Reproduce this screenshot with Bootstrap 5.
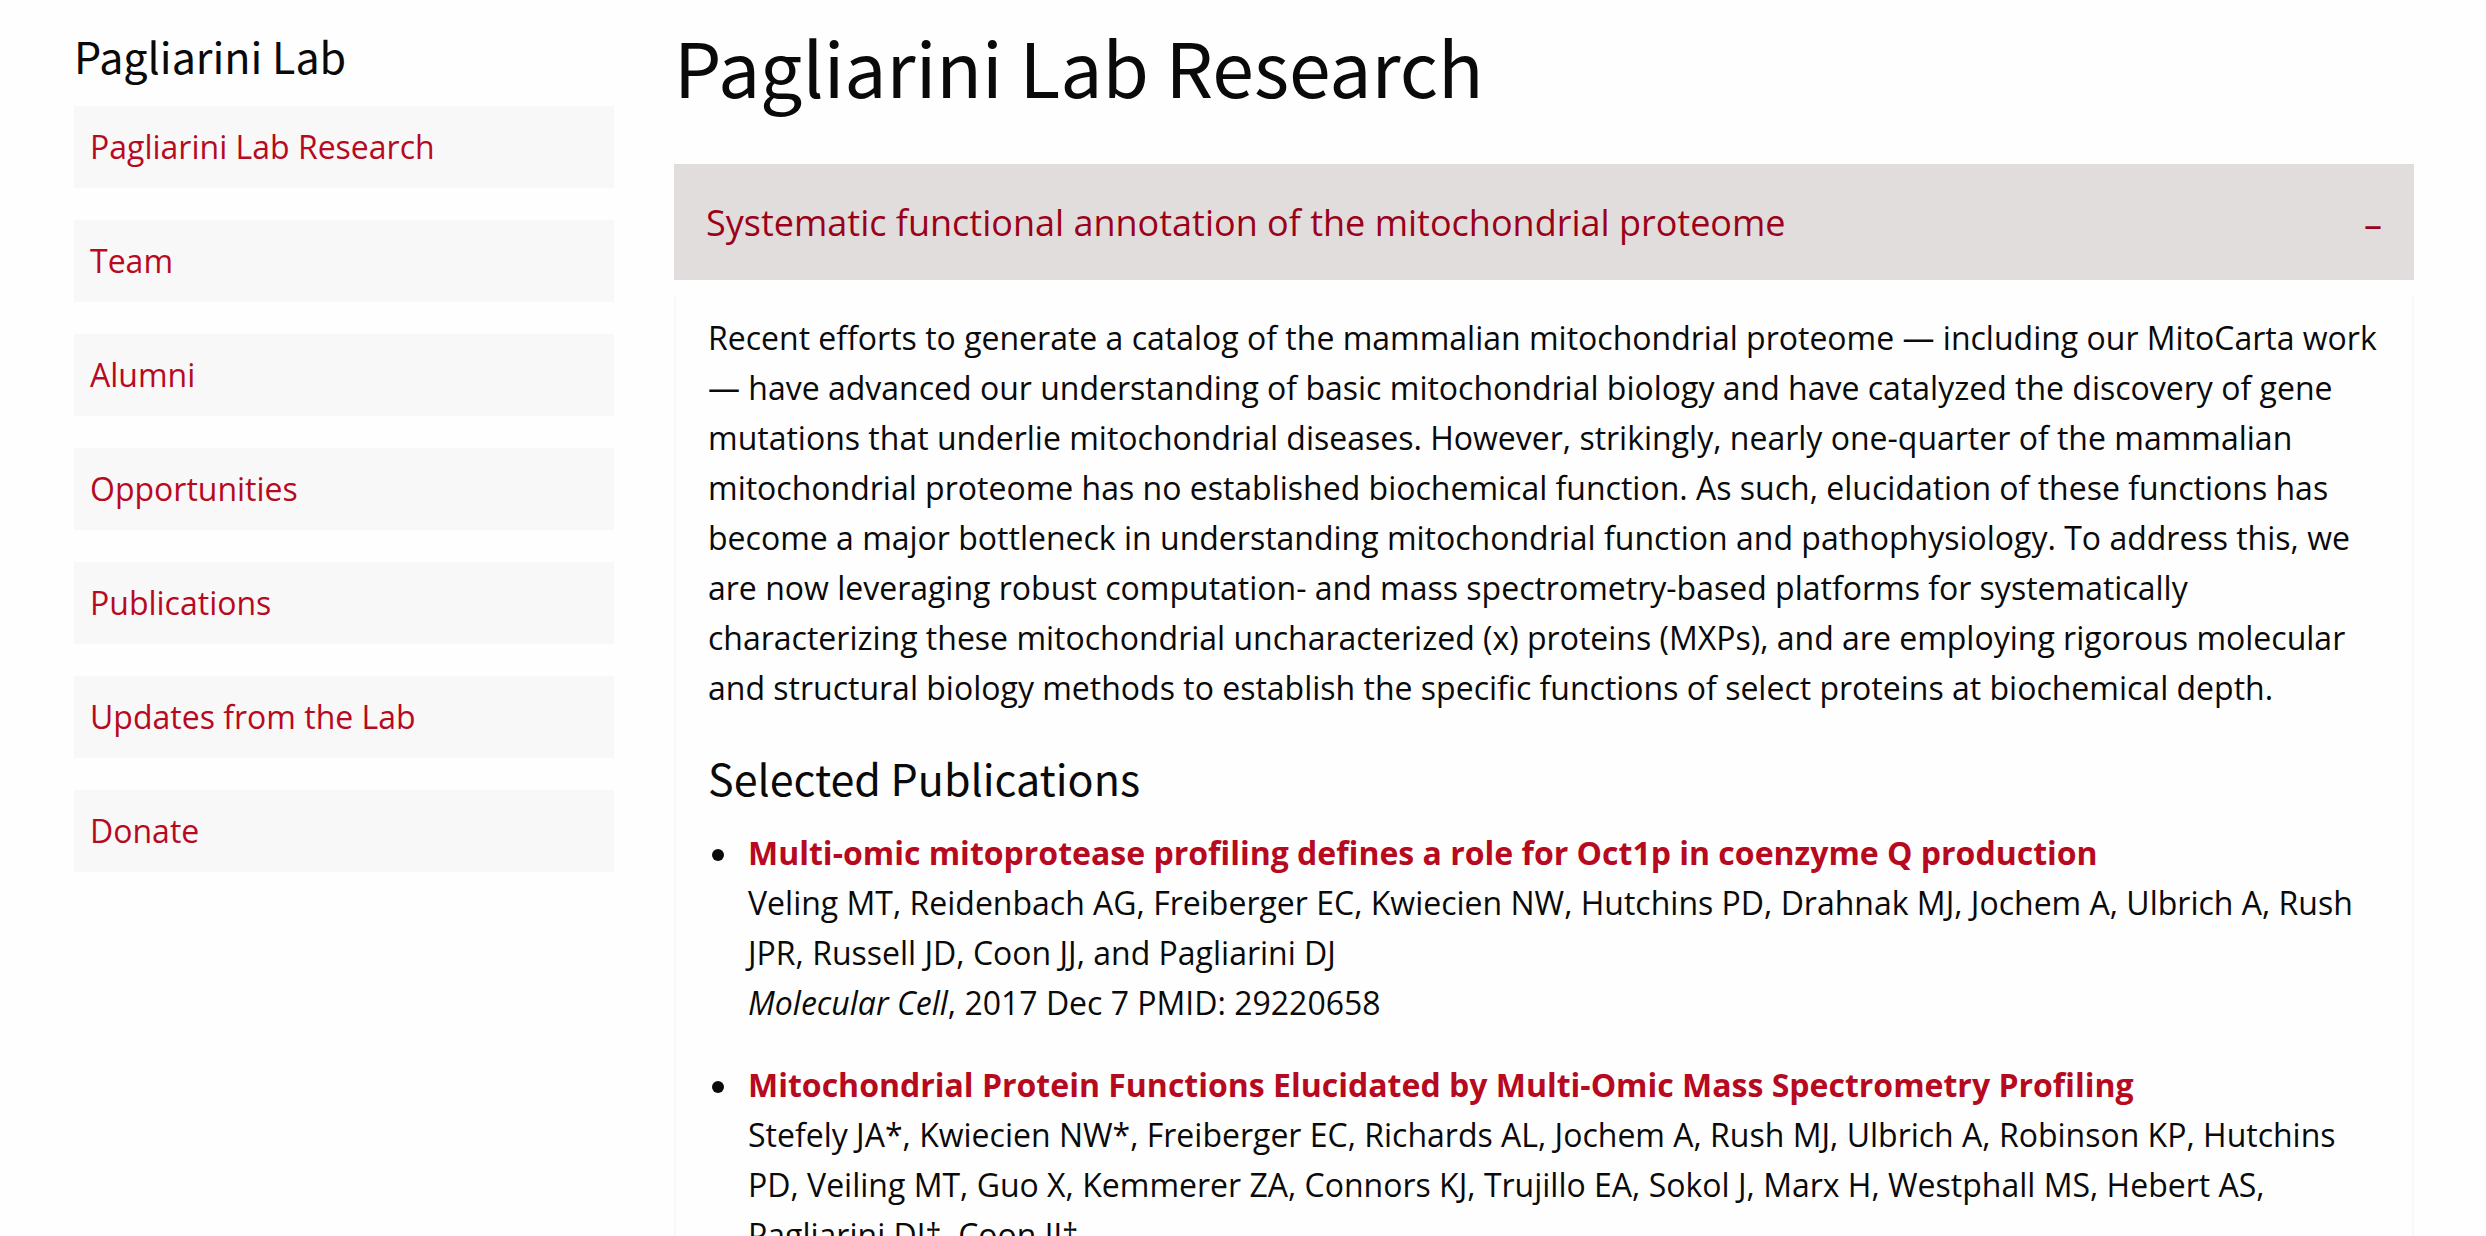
<!DOCTYPE html>
<html lang="en">
<head>
<meta charset="utf-8">
<meta name="viewport" content="width=device-width, initial-scale=1">
<title>Pagliarini Lab Research</title>
<link href="https://cdn.jsdelivr.net/npm/bootstrap@5.3.0/dist/css/bootstrap.min.css" rel="stylesheet">
<style>
  body { font-family: "Open Sans", sans-serif; font-size: 32px; line-height: 50px; color: #0a0a0a; background: #fefefe; }
  a { color: #b70a1f; text-decoration: none; }
  h1, h2, h3 { font-family: "Noto Sans CJK SC", sans-serif; font-weight: 400; margin: 0; }
  .page-shell { padding: 16px 72px 32px 74px; }
  .page-shell > .row { --bs-gutter-x: 60px; }
  h1 { font-size: 75px; line-height: 100px; margin-bottom: 48px; }
  h2, h3 { font-size: 43px; line-height: 64px; }
  .side-title { margin: 7px 0 19px; }
  .side-links { gap: 32px; }
  .side-links .nav-link { padding: 16px; background: #f8f8f8; color: #b70a1f; }
  .topic-toggle { padding: 33px 32px 31px; background: #e1dddc; color: #9b0219; font-size: 36px; line-height: 52px; }
  .topic-mark { padding-top: 4px; line-height: 48px; }
  .topic-body { margin-top: 16px; padding: 17px 32px; border: 2px solid #f8f8f8; border-width: 0 2px; }
  .topic-body p { margin-bottom: 32px; }
  .pub-list { margin: 19px 0 0; padding-left: 40px; list-style: none; }
  .pub-list li { margin-bottom: 32px; }
  .pub-list li::before { content: ""; display: inline-block; width: 12px; height: 12px; margin: 0 24px 0 -36px; border-radius: 50%; background: #0a0a0a; vertical-align: 4px; }
</style>
<script src="https://cdn.jsdelivr.net/npm/bootstrap@5.3.0/dist/js/bootstrap.bundle.min.js" defer></script>
</head>
<body>
<div class="container-fluid page-shell">
  <div class="row">
    <aside class="col-3">
      <h2 class="side-title">Pagliarini Lab</h2>
      <nav class="nav flex-column side-links" aria-label="Pagliarini Lab">
        <a class="nav-link" href="#">Pagliarini Lab Research</a>
        <a class="nav-link" href="#">Team</a>
        <a class="nav-link" href="#">Alumni</a>
        <a class="nav-link" href="#">Opportunities</a>
        <a class="nav-link" href="#">Publications</a>
        <a class="nav-link" href="#">Updates from the Lab</a>
        <a class="nav-link" href="#">Donate</a>
      </nav>
    </aside>
    <main class="col-9">
      <h1>Pagliarini Lab Research</h1>
      <button class="topic-toggle d-flex w-100 justify-content-between align-items-center border-0 text-start" type="button" data-bs-toggle="collapse" data-bs-target="#proteome" aria-expanded="true" aria-controls="proteome">
        <span>Systematic functional annotation of the mitochondrial proteome</span>
        <span class="topic-mark">–</span>
      </button>
      <div class="collapse show" id="proteome">
        <div class="topic-body">
          <p>Recent efforts to generate a catalog of the mammalian mitochondrial proteome — including our MitoCarta work — have advanced our understanding of basic mitochondrial biology and have catalyzed the discovery of gene mutations that underlie mitochondrial diseases. However, strikingly, nearly one-quarter of the mammalian mitochondrial proteome has no established biochemical function. As such, elucidation of these functions has become a major bottleneck in understanding mitochondrial function and pathophysiology. To address this, we are now leveraging robust computation- and mass spectrometry-based platforms for systematically characterizing these mitochondrial uncharacterized (x) proteins (MXPs), and are employing rigorous molecular and structural biology methods to establish the specific functions of select proteins at biochemical depth.</p>
          <h3>Selected Publications</h3>
          <ul class="pub-list">
            <li><a class="fw-bold" href="#">Multi-omic mitoprotease profiling defines a role for Oct1p in coenzyme Q production</a><br>
              Veling MT, Reidenbach AG, Freiberger EC, Kwiecien NW, Hutchins PD, Drahnak MJ, Jochem A, Ulbrich A, Rush JPR, Russell JD, Coon JJ, and Pagliarini DJ<br>
              <em>Molecular Cell</em>, 2017 Dec 7 PMID: 29220658</li>
            <li><a class="fw-bold" href="#">Mitochondrial Protein Functions Elucidated by Multi-Omic Mass Spectrometry Profiling</a><br>
              Stefely JA*, Kwiecien NW*, Freiberger EC, Richards AL, Jochem A, Rush MJ, Ulbrich A, Robinson KP, Hutchins PD, Veiling MT, Guo X, Kemmerer ZA, Connors KJ, Trujillo EA, Sokol J, Marx H, Westphall MS, Hebert AS, Pagliarini DJ†, Coon JJ†</li>
          </ul>
        </div>
      </div>
    </main>
  </div>
</div>
</body>
</html>
